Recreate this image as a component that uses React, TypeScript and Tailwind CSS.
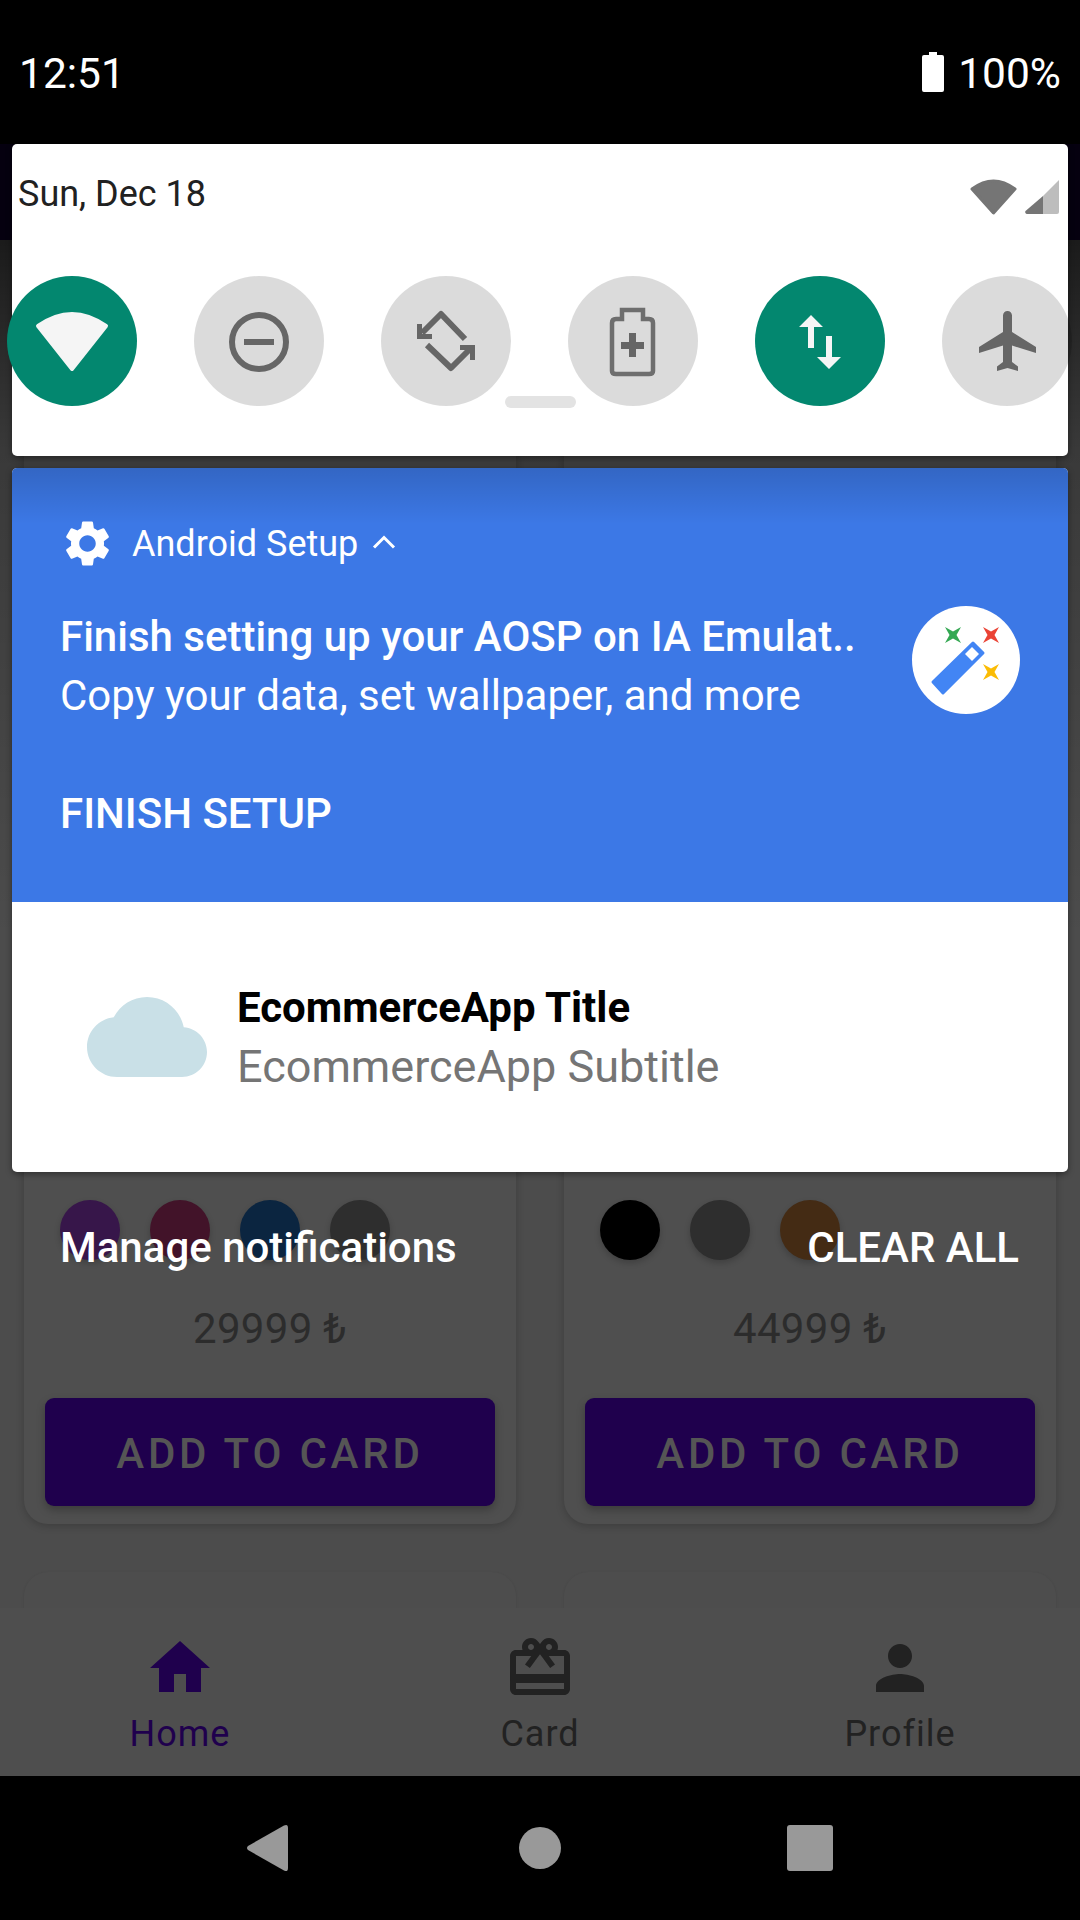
const roboto = "font-['Roboto',sans-serif]"

function Tile({ on, children }: { on?: boolean; children: React.ReactNode }) {
  return (
    <div className={`h-[130px] w-[130px] shrink-0 rounded-full ${on ? 'bg-[#03876f]' : 'bg-black/[0.14]'}`}>
      <svg viewBox="0 0 130 130" className="h-full w-full">
        {children}
      </svg>
    </div>
  )
}

function ProductCard({ price, swatches }: { price: string; swatches: string[] }) {
  return (
    <div className="flex h-[1524px] flex-col justify-end rounded-[24px] bg-[#4f4f4f] shadow-[0_2px_8px_rgba(0,0,0,0.2)]">
      <div className="flex gap-[30px] px-[36px]">
        {swatches.map((c) => (
          <div key={c} className="h-[60px] w-[60px] rounded-full shadow-[0_3px_6px_rgba(0,0,0,0.2)]" style={{ backgroundColor: c }} />
        ))}
      </div>
      <div className="mt-[46px] text-center text-[42px] leading-[46px] tracking-[0.3px] text-[#2c2c2c]">{price}</div>
      <div className="mx-[21px] mb-[18px] mt-[46px] flex h-[108px] items-center justify-center rounded-[9px] bg-[#1f004d] pt-[3px] text-[42px] font-medium tracking-[3.800px] text-[#555555] shadow-[0_4px_8px_rgba(0,0,0,0.25)]">
        ADD TO CARD
      </div>
    </div>
  )
}

function NavItem({ label, active, children }: { label: string; active?: boolean; children: React.ReactNode }) {
  return (
    <div className={`flex w-[360px] flex-col items-center pt-[24px] ${active ? 'text-[#1f004d]' : 'text-[#222222]'}`}>
      <svg viewBox="0 0 24 24" fill="currentColor" className="h-[72px] w-[72px]">
        {children}
      </svg>
      <span className="mt-[8px] text-[36px] leading-[44px] tracking-[1px]">{label}</span>
    </div>
  )
}

function Star({ x, y, color }: { x: number; y: number; color: string }) {
  return (
    <path
      d={`M${x - 8} ${y - 8} L${x} ${y - 3.500} L${x + 8} ${y - 8} L${x + 3.500} ${y} L${x + 8} ${y + 8} L${x} ${y + 3.500} L${x - 8} ${y + 8} L${x - 3.500} ${y} Z`}
      fill={color}
    />
  )
}

export default function App() {
  return (
    <div className={`relative h-[1920px] w-[1080px] overflow-hidden bg-[#4c4c4c] ${roboto}`}>
      {/* app underneath the shade */}
      <div className="flex h-full flex-col">
        <div className="h-[144px] shrink-0 bg-black" />
        <div className="h-[96px] shrink-0 bg-[#05000f]" />
        <div className="grid h-[1368px] shrink-0 grid-cols-2 gap-x-[48px] overflow-hidden px-[24px]">
          <div className="flex flex-col gap-[48px]">
            <div className="-mt-[240px]">
              <ProductCard price="29999 ₺" swatches={['#37164a', '#421329', '#0b2540', '#2e2e2e']} />
            </div>
            <div className="h-[100px] rounded-[24px] bg-[#4d4d4d] shadow-[0_1px_3px_rgba(0,0,0,0.1)]" />
          </div>
          <div className="flex flex-col gap-[48px]">
            <div className="-mt-[240px]">
              <ProductCard price="44999 ₺" swatches={['#000000', '#2e2e2e', '#442b14']} />
            </div>
            <div className="h-[100px] rounded-[24px] bg-[#4d4d4d] shadow-[0_1px_3px_rgba(0,0,0,0.1)]" />
          </div>
        </div>
        <div className="flex h-[168px] shrink-0 bg-[#4e4e4e]">
          <NavItem label="Home" active>
            <path d="M10 20v-6h4v6h5v-8h3L12 3 2 12h3v8z" />
          </NavItem>
          <NavItem label="Card">
            <path d="M20 6h-2.180c.110-.310.180-.650.180-1 0-1.660-1.340-3-3-3-1.050 0-1.960.540-2.500 1.350l-.500.670-.500-.680C10.960 2.540 10.050 2 9 2 7.340 2 6 3.340 6 5c0 .350.070.690.180 1H4c-1.110 0-1.990.890-1.990 2L2 19c0 1.110.890 2 2 2h16c1.110 0 2-.890 2-2V8c0-1.110-.890-2-2-2zm-5-2c.550 0 1 .450 1 1s-.450 1-1 1-1-.450-1-1 .450-1 1-1zM9 4c.550 0 1 .450 1 1s-.450 1-1 1-1-.450-1-1 .450-1 1-1zm11 15H4v-2h16v2zm0-5H4V8h5.080L7 10.830 8.620 12 11 8.760l1-1.360 1 1.360L15.380 12 17 10.830 14.920 8H20v6z" />
          </NavItem>
          <NavItem label="Profile">
            <path d="M12 12c2.210 0 4-1.790 4-4s-1.790-4-4-4-4 1.790-4 4 1.790 4 4 4zm0 2c-2.670 0-8 1.340-8 4v2h16v-2c0-2.660-5.330-4-8-4z" />
          </NavItem>
        </div>
        <div className="flex flex-1 items-center justify-center bg-black pr-[2px]">
          <svg viewBox="0 0 42 48" className="h-[48px] w-[42px]" fill="#999999">
            <path d="M38 1.500 Q42 -0.500 42 4 V44 Q42 48.500 38 46.500 L2 26 Q0 24 2 22 Z" />
          </svg>
          <div className="ml-[231px] h-[42px] w-[42px] rounded-full bg-[#999999]" />
          <div className="ml-[226px] h-[46px] w-[46px] rounded-[3px] bg-[#999999]" />
        </div>
      </div>

      {/* darkening towards the top of the shade */}
      <div className="absolute inset-x-0 top-[240px] h-[700px] bg-gradient-to-b from-black/65 via-black/25 via-30% to-black/0" />

      {/* status bar */}
      <div className="absolute inset-x-0 top-0 flex h-[144px] items-center justify-between pl-[19px] pr-[19px] pt-[4px] text-[42.500px] leading-none text-white">
        <span>12:51</span>
        <div className="flex items-center gap-[14px]">
          <svg viewBox="0 0 22 40" className="mb-[5px] h-[40px] w-[22px]" fill="#ffffff">
            <path d="M7 0h8v3h5a2 2 0 0 1 2 2v33a2 2 0 0 1-2 2H2a2 2 0 0 1-2-2V5a2 2 0 0 1 2-2h5z" />
          </svg>
          <span>100%</span>
        </div>
      </div>

      {/* quick settings */}
      <div className="absolute left-[12px] top-[144px] h-[312px] w-[1056px] rounded-[5px] bg-white shadow-[0_2px_6px_rgba(0,0,0,0.4)]">
        <div className="flex h-[100px] items-center justify-between pl-[6px] pr-[9px]">
          <span className="text-[36px] leading-none text-[#212121]">Sun, Dec 18</span>
          <div className="flex items-center gap-[8px] pt-[5px]">
            <svg viewBox="0 0 47 36" className="h-[36px] w-[47px]">
              <path d="M2 10 Q23.500 -6 45 10 L23.500 34 Z" fill="#757575" stroke="#757575" strokeWidth="3" strokeLinejoin="round" />
            </svg>
            <svg viewBox="0 0 34 34" className="h-[34px] w-[34px]">
              <path d="M34 0V32a2 2 0 0 1-2 2H18V16z" fill="#bdbdbd" />
              <path d="M18 16V34H2a2 2 0 0 1-1.500-3z" fill="#757575" />
            </svg>
          </div>
        </div>
        <div className="-mx-[5px] mt-[32px] flex gap-[57px]">
          <Tile on>
            <path d="M31 50 Q65 26 99 50 L65 93 Z" fill="#f5f5f5" stroke="#f5f5f5" strokeWidth="4" strokeLinejoin="round" />
          </Tile>
          <Tile>
            <circle cx="65" cy="66" r="27" fill="none" stroke="#666666" strokeWidth="6" />
            <rect x="50" y="63" width="30" height="6" fill="#666666" />
          </Tile>
          <Tile>
            <path d="M41 57 L60 38 L84 63" fill="none" stroke="#666666" strokeWidth="6" strokeLinejoin="round" />
            <path d="M36 48 H41 V58 H51 V63 H36 Z" fill="#666666" />
            <path d="M46 69 L70 92 L89 73" fill="none" stroke="#666666" strokeWidth="6" strokeLinejoin="round" />
            <path d="M94 84 H89 V74 H79 V69 H94 Z" fill="#666666" />
          </Tile>
          <Tile>
            <path d="M54 43 V34 H75 V43 H81 Q85 43 85 47 V95 Q85 98 81 98 H48 Q44 98 44 95 V47 Q44 43 48 43 Z" fill="none" stroke="#6e6e6e" strokeWidth="4.500" />
            <path d="M61 57 H68 V66 H76 V73 H68 V81 H61 V73 H53 V66 H61 Z" fill="#666666" />
          </Tile>
          <Tile on>
            <path d="M56 39 L68 51 H59 V72 H53 V51 H44 Z" fill="#f5f5f5" />
            <path d="M71 60 H77 V81 H86 L74 93 L62 81 H71 Z" fill="#f5f5f5" />
          </Tile>
          <Tile>
            <svg x="31" y="29" width="72" height="72" viewBox="0 0 24 24">
              <path d="M21 16v-2l-8-5V3.500c0-.830-.670-1.500-1.500-1.500S10 2.670 10 3.500V9l-8 5v2l8-2.500V19l-2 1.500V22l3.500-1 3.500 1v-1.500L13 19v-5.500l8 2.500z" fill="#666666" />
            </svg>
          </Tile>
        </div>
        <div className="absolute left-[493px] top-[252px] h-[12px] w-[71px] rounded-full bg-[#e3e3e3]" />
      </div>

      {/* notifications */}
      <div className="absolute left-[12px] top-[468px] w-[1056px] overflow-hidden rounded-[5px] bg-white shadow-[0_2px_6px_rgba(0,0,0,0.4)]">
        <div className="relative h-[434px] bg-[#3c78e6] text-white">
          <div className="absolute inset-x-0 top-0 h-[56px] bg-gradient-to-b from-black/15 to-transparent" />
          <div className="relative flex h-[150px] items-center pl-[48px]">
            <svg viewBox="0 0 24 24" className="h-[55px] w-[55px]" fill="#ffffff">
              <path d="M19.140 12.940c.040-.300.060-.610.060-.940 0-.320-.020-.640-.070-.940l2.030-1.580c.180-.140.230-.410.120-.610l-1.920-3.320c-.120-.220-.370-.290-.590-.220l-2.390.960c-.500-.380-1.030-.700-1.620-.940l-.360-2.540c-.040-.240-.240-.410-.480-.410h-3.840c-.240 0-.430.170-.470.410l-.360 2.540c-.590.240-1.130.570-1.620.940l-2.390-.960c-.220-.080-.470 0-.590.220L2.740 8.870c-.120.210-.080.470.120.610l2.030 1.580c-.050.300-.090.630-.090.940s.020.640.070.940l-2.030 1.580c-.180.140-.230.410-.120.610l1.920 3.320c.120.220.370.290.590.220l2.390-.960c.500.380 1.030.700 1.620.940l.360 2.540c.050.240.240.410.480.410h3.840c.240 0 .440-.170.470-.410l.360-2.540c.590-.240 1.130-.560 1.620-.940l2.390.960c.22.080.470 0 .59-.22l1.920-3.320c.120-.22.070-.47-.12-.61l-2.010-1.58zM12 15.600c-1.980 0-3.600-1.62-3.600-3.600s1.620-3.600 3.600-3.600 3.600 1.62 3.600 3.600-1.620 3.600-3.600 3.600z" />
            </svg>
            <span className="ml-[17px] pt-[2px] text-[36px] leading-none">Android Setup</span>
            <svg viewBox="0 0 24 15" className="-mt-[3px] ml-[14px] h-[15px] w-[24px]" fill="none" stroke="#ffffff" strokeWidth="3">
              <path d="M2 13.500 L12 3.500 L22 13.500" />
            </svg>
          </div>
          <div className="relative -mt-[11px] flex items-start justify-between pl-[48px] pr-[48px]">
            <div>
              <div className="text-[42px] font-medium leading-[60px]">Finish setting up your AOSP on IA Emulat..</div>
              <div className="text-[42px] leading-[58px]">Copy your data, set wallpaper, and more</div>
              <div className="mt-[60px] text-[42px] font-medium leading-[58px]">FINISH SETUP</div>
            </div>
            <svg viewBox="0 0 108 108" className="-mt-[1px] h-[108px] w-[108px] shrink-0">
              <circle cx="54" cy="54" r="54" fill="#ffffff" />
              <Star x={41} y={29} color="#34a853" />
              <Star x={79} y={29} color="#ea4335" />
              <Star x={79} y={66} color="#fbbc04" />
              <path d="M61 37 L71 47 L31 87 L21 76 Z" fill="#4285f4" stroke="#4285f4" strokeWidth="3" strokeLinejoin="round" />
              <path d="M60 41 L67 48 L60 55 L53 48 Z" fill="#ffffff" />
            </svg>
          </div>
        </div>
        <div className="flex h-[270px] items-center pl-[75px]">
          <svg viewBox="0 0 24 16" className="h-[80px] w-[120px]" fill="#c9e0e7">
            <path d="M19.350 6.040C18.670 2.590 15.640 0 12 0 9.110 0 6.600 1.640 5.350 4.040 2.340 4.360 0 6.910 0 10c0 3.310 2.690 6 6 6h13c2.760 0 5-2.240 5-5 0-2.640-2.050-4.780-4.650-4.960z" />
          </svg>
          <div className="ml-[30px]">
            <div className="text-[42px] font-bold leading-[60px] text-black">EcommerceApp Title</div>
            <div className="text-[45px] leading-[58px] text-[#757575]">EcommerceApp Subtitle</div>
          </div>
        </div>
      </div>

      {/* shade footer */}
      <div className="absolute left-[60px] right-[61px] top-[1223px] flex justify-between text-[42px] font-medium leading-[50px] text-white">
        <span>Manage notifications</span>
        <span>CLEAR ALL</span>
      </div>
    </div>
  )
}
